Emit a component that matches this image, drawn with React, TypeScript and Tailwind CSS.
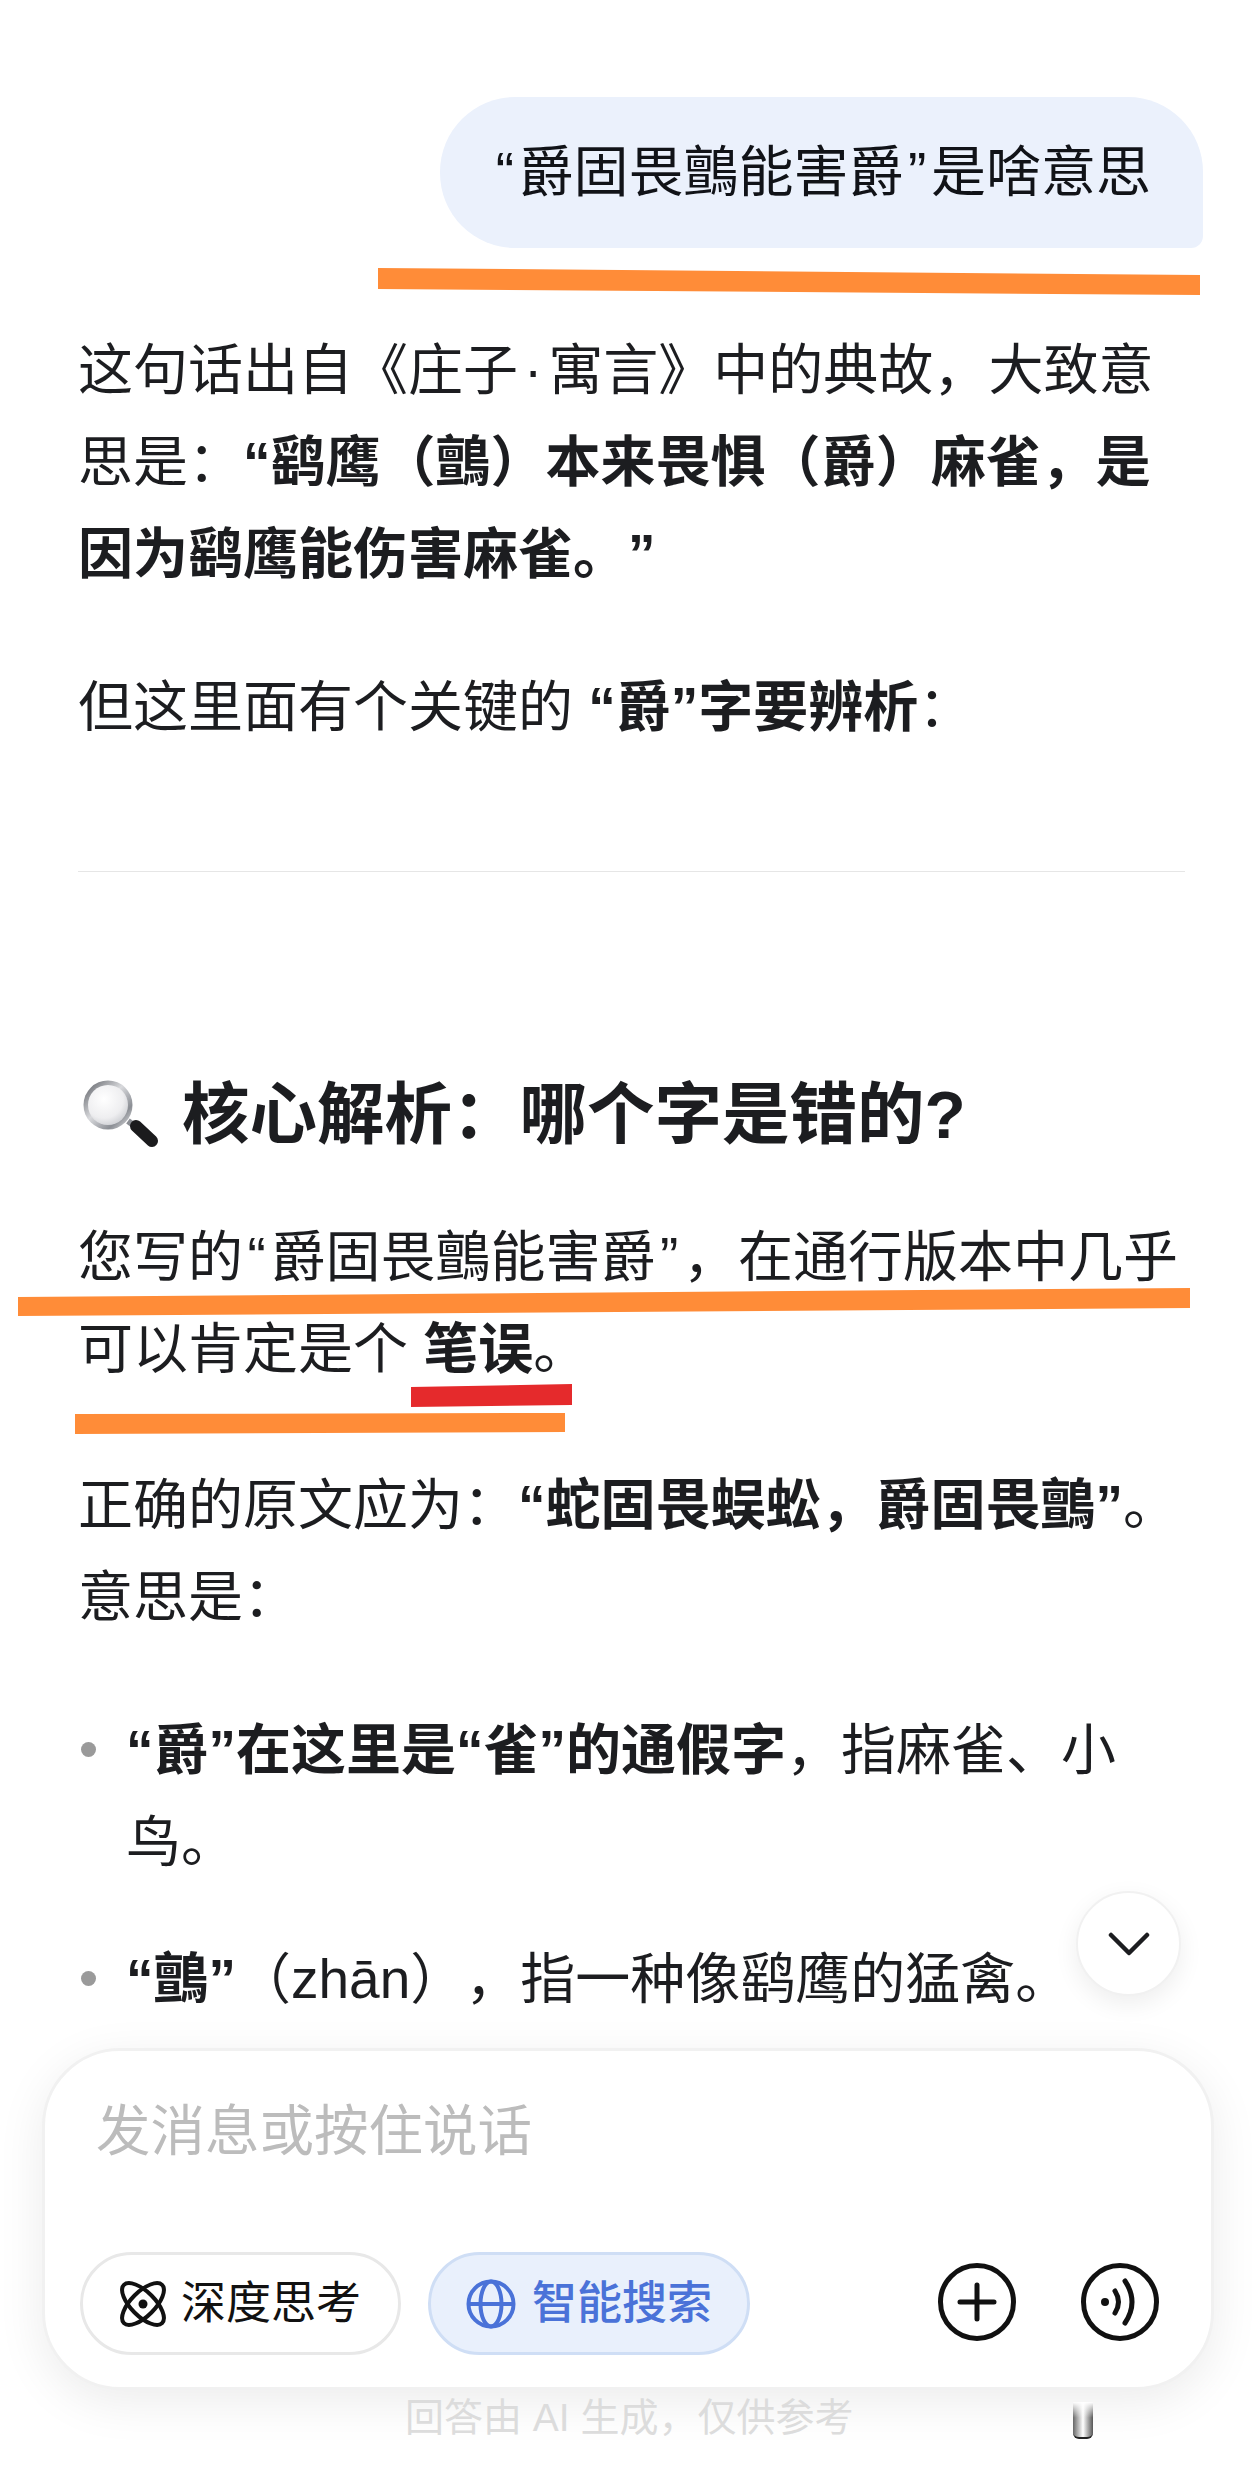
import { ReactNode } from "react";

const FONT = "font-['Liberation_Sans','Noto_Sans_CJK_SC',sans-serif]";

// full-width punctuation, Liberation has none of these so they fall to the CJK face
const COMMA = "\uFF0C";
const COLON = "\uFF1A";
const LP = "\uFF08";
const RP = "\uFF09";

// regular weight quotes are too narrow in Liberation, pad them out
function Q({ children }: { children: ReactNode }) {
  return <span className="px-[0.083em]">{children}</span>;
}

function Para({ className = "", children }: { className?: string; children: ReactNode }) {
  return <p className={`text-[55px] leading-[92px] text-[#1c1d20] ${className}`}>{children}</p>;
}

function Magnifier() {
  return (
    <svg width="82" height="70" viewBox="0 0 82 70" className="shrink-0">
      <defs>
        <linearGradient id="ring" x1="0" y1="0" x2="1" y2="1">
          <stop offset="0" stopColor="#55585e" />
          <stop offset="0.45" stopColor="#d9dadd" />
          <stop offset="0.75" stopColor="#8b8e94" />
          <stop offset="1" stopColor="#f0f0f2" />
        </linearGradient>
        <radialGradient id="lens" cx="0.4" cy="0.35" r="0.8">
          <stop offset="0" stopColor="#ffffff" />
          <stop offset="0.6" stopColor="#eeeef0" />
          <stop offset="1" stopColor="#bfc1c6" />
        </radialGradient>
      </defs>
      <path d="M50 41 L58 47" stroke="#8b8e94" strokeWidth="6" />
      <path d="M58 46 L74 61" stroke="#1b1b1d" strokeWidth="12" strokeLinecap="round" />
      <circle cx="30" cy="25" r="24.5" fill="url(#ring)" />
      <circle cx="30" cy="25" r="20" fill="url(#lens)" />
    </svg>
  );
}

function AtomIcon() {
  return (
    <svg width="46" height="46" viewBox="0 0 46 46" fill="none" stroke="#111" strokeWidth="4">
      <ellipse cx="23" cy="23" rx="27" ry="12" transform="rotate(45 23 23)" />
      <ellipse cx="23" cy="23" rx="27" ry="12" transform="rotate(-45 23 23)" />
      <circle cx="23" cy="23" r="4.5" fill="#111" stroke="none" />
    </svg>
  );
}

function GlobeIcon() {
  return (
    <svg width="50" height="50" viewBox="0 0 50 50" fill="none" stroke="#4a72d8" strokeWidth="4">
      <circle cx="25" cy="25" r="22.5" />
      <ellipse cx="25" cy="25" rx="10.5" ry="22.5" />
      <path d="M2.5 25 H47.5" />
    </svg>
  );
}

function PlusIcon() {
  return (
    <svg width="78" height="78" viewBox="0 0 78 78" fill="none" stroke="#111" strokeWidth="5">
      <circle cx="39" cy="39" r="36.5" />
      <path d="M22 39 H56 M39 22 V56" strokeLinecap="round" />
    </svg>
  );
}

function VoiceIcon() {
  return (
    <svg width="78" height="78" viewBox="0 0 78 78" fill="none" stroke="#111" strokeWidth="5">
      <circle cx="39" cy="39" r="36.5" />
      <circle cx="24" cy="39" r="4" fill="#111" stroke="none" />
      <path d="M34 28 Q41 39 34 50" strokeLinecap="round" />
      <path d="M44 18 Q58 39 44 60" strokeLinecap="round" />
    </svg>
  );
}

export default function App() {
  return (
    <div className={`relative h-[2466px] w-[1256px] overflow-hidden bg-white [text-spacing-trim:space-all] ${FONT}`}>
      <div className="pl-[78px] pr-[71px] pt-[97px]">
        <div className="-mr-[18px] flex justify-end">
          <div className="flex h-[151px] w-[763px] items-center justify-end rounded-[75px] rounded-br-[12px] bg-[#ebf1fc] pr-[52px]">
            <span className="text-[55px] text-[#111318]">
              <Q>“</Q>爵固畏鸇能害爵<Q>”</Q>是啥意思
            </span>
          </div>
        </div>

        <Para className="mt-[76px]">
          这句话出自《庄子<span className="px-[6px]">·</span>寓言》中的典故{COMMA}大致意思是{COLON}
          <b>“鹞鹰{LP}鸇{RP}本来畏惧{LP}爵{RP}麻雀{COMMA}是因为鹞鹰能伤害麻雀。”</b>
        </Para>
        <Para className="mt-[61px]">
          但这里面有个关键的 <b>“爵”字要辨析</b>{COLON}
        </Para>

        <hr className="mt-[118px] border-[#e6e6e6]" />

        <h2 className="mt-[193px] flex h-[100px] items-center gap-[22px] text-[67.5px] font-bold text-[#1c1d20]">
          <Magnifier />
          <span>核心解析{COLON}哪个字是错的?</span>
        </h2>

        <Para className="mt-[46px]">
          您写的<Q>“</Q>爵固畏鸇能害爵<Q>”</Q>{COMMA}在通行版本中几乎可以肯定是个 <b>笔误</b>。
        </Para>
        <Para className="mt-[64px] leading-[90px]">
          正确的原文应为{COLON}<b>“蛇固畏蜈蚣{COMMA}爵固畏鸇”</b>。意思是{COLON}
        </Para>

        <ul className="mt-[61px] flex flex-col gap-[45px]">
          <li className="flex">
            <span className="ml-[3px] mr-[30px] mt-[38px] h-[15px] w-[15px] shrink-0 rounded-full bg-[#9a9a9a]" />
            <Para className="w-[1000px]">
              <b>“爵”在这里是“雀”的通假字</b>{COMMA}指麻雀、小鸟。
            </Para>
          </li>
          <li className="flex">
            <span className="ml-[3px] mr-[30px] mt-[38px] h-[15px] w-[15px] shrink-0 rounded-full bg-[#9a9a9a]" />
            <Para>
              <b>“鸇”</b>{LP}zhān{RP}{COMMA}指一种像鹞鹰的猛禽。
            </Para>
          </li>
        </ul>
      </div>

      {/* hand-drawn marks */}
      <svg className="pointer-events-none absolute inset-0" width="1256" height="2466">
        <polygon points="378,268 1200,275 1200,295 378,289" fill="#ff8c38" />
        <polygon points="18,1297 1190,1288 1190,1308 18,1316" fill="#ff8c38" />
        <polygon points="75,1414 565,1413 565,1432 75,1434" fill="#ff8c38" />
        <polygon points="411,1387 572,1384 572,1405 411,1407" fill="#e52a2c" />
      </svg>

      {/* scroll to bottom */}
      <div className="absolute left-[1076px] top-[1891px] flex h-[105px] w-[105px] items-center justify-center rounded-full border-2 border-[#f1f1f1] bg-white shadow-[0_8px_24px_rgba(0,0,0,0.07)]">
        <svg width="42" height="26" viewBox="0 0 42 26" fill="none" stroke="#1c1d20" strokeWidth="4.5" strokeLinecap="round" strokeLinejoin="round">
          <path d="M3 4 L21 22 L39 4" />
        </svg>
      </div>

      {/* composer */}
      <div className="absolute left-[42px] top-[2048px] flex h-[342px] w-[1172px] flex-col justify-between rounded-[78px] border-[3px] border-[#f1f1f1] bg-white pb-[32px] pl-[35px] pr-[52px] pt-[49px] shadow-[0_12px_48px_rgba(0,0,0,0.08)]">
        <div className="pl-[16px] text-[54.5px] leading-[64px] text-[#bcbcbc]">发消息或按住说话</div>
        <div className="flex items-center">
          <div className="flex h-[103px] w-[321px] items-center justify-center gap-[15px] rounded-full border-[3px] border-[#e8e8e8]">
            <AtomIcon />
            <span className="text-[45px] text-[#111]">深度思考</span>
          </div>
          <div className="ml-[27px] flex h-[103px] w-[322px] items-center justify-center gap-[16px] rounded-full border-[3px] border-[#cfdef5] bg-[#e9f0fc]">
            <GlobeIcon />
            <span className="text-[45px] font-medium text-[#4a72d8]">智能搜索</span>
          </div>
          <div className="mb-[3px] ml-auto flex gap-[65px]">
            <PlusIcon />
            <VoiceIcon />
          </div>
        </div>
      </div>

      {/* disclaimer */}
      <div className="absolute left-[405px] top-[2398px] text-[39px] leading-[40px] text-[#dcdcdc]">回答由 AI 生成{COMMA}仅供参考</div>
      <div className="absolute left-[1073px] top-[2402px] h-[37px] w-[20px] rounded-b-[6px] border-b-2 border-[#222] bg-[linear-gradient(to_bottom,#ffffff,transparent_45%),linear-gradient(to_right,#666666,#ffffff_50%,#555555)]" />
    </div>
  );
}
